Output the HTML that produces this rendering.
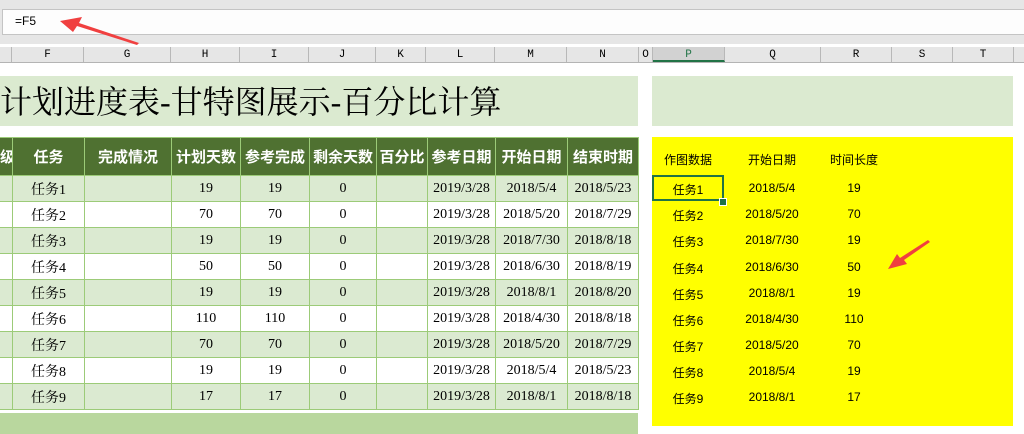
<!DOCTYPE html>
<html><head><meta charset="utf-8"><style>
body{margin:0;width:1024px;height:434px;overflow:hidden;background:#fff;font-family:"Liberation Serif","Noto Serif CJK SC",serif;position:relative}
.a{position:absolute}
.fb{left:0;top:0;width:1024px;height:44px;background:#e6e6e6}
.fbox{left:2px;top:9px;width:1030px;height:26px;background:#fdfdfd;border:1px solid #c4c4c4;box-sizing:border-box}
.ch{left:0;top:47px;width:1024px;height:15px;background:#e6e6e6;border-bottom:1px solid #b4b4b4}
.ch div{position:absolute;top:0;height:15px;font-size:11px;line-height:16px;text-align:center;border-right:1px solid #b8b8b8;box-sizing:border-box;font-family:"Liberation Mono",monospace}
table{border-collapse:collapse;position:absolute;left:-1px;top:137px;font-size:14px;table-layout:fixed;width:639px}
td{border:1px solid #9ccb78;text-align:center;height:25px;padding:0;white-space:nowrap;overflow:hidden;font-family:"Liberation Serif","Noto Serif CJK SC",serif}
tr.h td{background:#4f7131;color:#fff;font-weight:bold;height:37px;font-family:"Liberation Sans","Noto Sans CJK SC",sans-serif;font-size:15px}
tr.g td{background:#dbead1}
.y{left:652px;top:137px;width:361px;height:289px;background:#ffff00;font-family:"Liberation Sans","Noto Sans CJK SC",sans-serif;font-size:12px}
.y div{position:absolute;text-align:center;width:80px}
</style></head><body>
<div class="a fb"></div>
<div class="a fbox"><span style="position:absolute;left:12px;top:4px;font-family:'Liberation Sans',sans-serif;font-size:12px">=F5</span></div>
<svg class="a" style="left:55px;top:14px" width="90" height="32"><polygon points="5,7 27,3 24,9 84,29 82,31 22,12 18,18" fill="#f04040"/></svg>
<div class="a ch">
<div style="left:0;width:12px"></div><div style="left:12px;width:72px">F</div><div style="left:84px;width:87px">G</div><div style="left:171px;width:69px">H</div><div style="left:240px;width:69px">I</div><div style="left:309px;width:67px">J</div><div style="left:376px;width:50px">K</div><div style="left:426px;width:69px">L</div><div style="left:495px;width:72px">M</div><div style="left:567px;width:72px">N</div><div style="left:639px;width:14px">O</div><div style="left:653px;width:72px;background:#d2d2d2;color:#217346;border-bottom:2px solid #217346">P</div><div style="left:725px;width:96px">Q</div><div style="left:821px;width:71px">R</div><div style="left:892px;width:61px">S</div><div style="left:953px;width:61px">T</div>
</div>
<div class="a" style="left:0;top:76px;width:638px;height:50px;background:#dbead0;font-size:32px;line-height:52px;white-space:nowrap;overflow:hidden">计划进度表-甘特图展示-百分比计算</div>
<div class="a" style="left:652px;top:76px;width:361px;height:50px;background:#dbead0"></div>
<table>
<colgroup><col style="width:13px"><col style="width:72px"><col style="width:87px"><col style="width:69px"><col style="width:69px"><col style="width:67px"><col style="width:51px"><col style="width:68px"><col style="width:72px"><col style="width:71px"></colgroup>
<tr class="h"><td>级</td><td>任务</td><td>完成情况</td><td>计划天数</td><td>参考完成</td><td>剩余天数</td><td>百分比</td><td>参考日期</td><td>开始日期</td><td>结束时期</td></tr>
<tr class="g"><td></td><td>任务1</td><td></td><td>19</td><td>19</td><td>0</td><td></td><td>2019/3/28</td><td>2018/5/4</td><td>2018/5/23</td></tr>
<tr><td></td><td>任务2</td><td></td><td>70</td><td>70</td><td>0</td><td></td><td>2019/3/28</td><td>2018/5/20</td><td>2018/7/29</td></tr>
<tr class="g"><td></td><td>任务3</td><td></td><td>19</td><td>19</td><td>0</td><td></td><td>2019/3/28</td><td>2018/7/30</td><td>2018/8/18</td></tr>
<tr><td></td><td>任务4</td><td></td><td>50</td><td>50</td><td>0</td><td></td><td>2019/3/28</td><td>2018/6/30</td><td>2018/8/19</td></tr>
<tr class="g"><td></td><td>任务5</td><td></td><td>19</td><td>19</td><td>0</td><td></td><td>2019/3/28</td><td>2018/8/1</td><td>2018/8/20</td></tr>
<tr><td></td><td>任务6</td><td></td><td>110</td><td>110</td><td>0</td><td></td><td>2019/3/28</td><td>2018/4/30</td><td>2018/8/18</td></tr>
<tr class="g"><td></td><td>任务7</td><td></td><td>70</td><td>70</td><td>0</td><td></td><td>2019/3/28</td><td>2018/5/20</td><td>2018/7/29</td></tr>
<tr><td></td><td>任务8</td><td></td><td>19</td><td>19</td><td>0</td><td></td><td>2019/3/28</td><td>2018/5/4</td><td>2018/5/23</td></tr>
<tr class="g"><td></td><td>任务9</td><td></td><td>17</td><td>17</td><td>0</td><td></td><td>2019/3/28</td><td>2018/8/1</td><td>2018/8/18</td></tr>
</table>
<div class="a" style="left:0;top:413px;width:638px;height:21px;background:#b9d79e"></div>
<div class="a y">
<div style="left:-4px;top:14px">作图数据</div><div style="left:80px;top:14px">开始日期</div><div style="left:162px;top:14px">时间长度</div>
<div style="left:0;top:38px;width:72px;height:26px;border:2px solid #217346;box-sizing:border-box"></div>
<div style="left:67px;top:61px;width:6px;height:6px;background:#217346;border:1px solid #fff"></div>
<div style="left:-4px;top:44px">任务1</div><div style="left:80px;top:44px">2018/5/4</div><div style="left:162px;top:44px">19</div>
<div style="left:-4px;top:70px">任务2</div><div style="left:80px;top:70px">2018/5/20</div><div style="left:162px;top:70px">70</div>
<div style="left:-4px;top:96px">任务3</div><div style="left:80px;top:96px">2018/7/30</div><div style="left:162px;top:96px">19</div>
<div style="left:-4px;top:123px">任务4</div><div style="left:80px;top:123px">2018/6/30</div><div style="left:162px;top:123px">50</div>
<div style="left:-4px;top:149px">任务5</div><div style="left:80px;top:149px">2018/8/1</div><div style="left:162px;top:149px">19</div>
<div style="left:-4px;top:175px">任务6</div><div style="left:80px;top:175px">2018/4/30</div><div style="left:162px;top:175px">110</div>
<div style="left:-4px;top:201px">任务7</div><div style="left:80px;top:201px">2018/5/20</div><div style="left:162px;top:201px">70</div>
<div style="left:-4px;top:227px">任务8</div><div style="left:80px;top:227px">2018/5/4</div><div style="left:162px;top:227px">19</div>
<div style="left:-4px;top:253px">任务9</div><div style="left:80px;top:253px">2018/8/1</div><div style="left:162px;top:253px">17</div>
</div>
<svg class="a" style="left:884px;top:238px" width="50" height="36"><polygon points="46,4 20,22 23,26 4,31 13,16 16,20 44,2" fill="#f04040"/></svg>
</body></html>
